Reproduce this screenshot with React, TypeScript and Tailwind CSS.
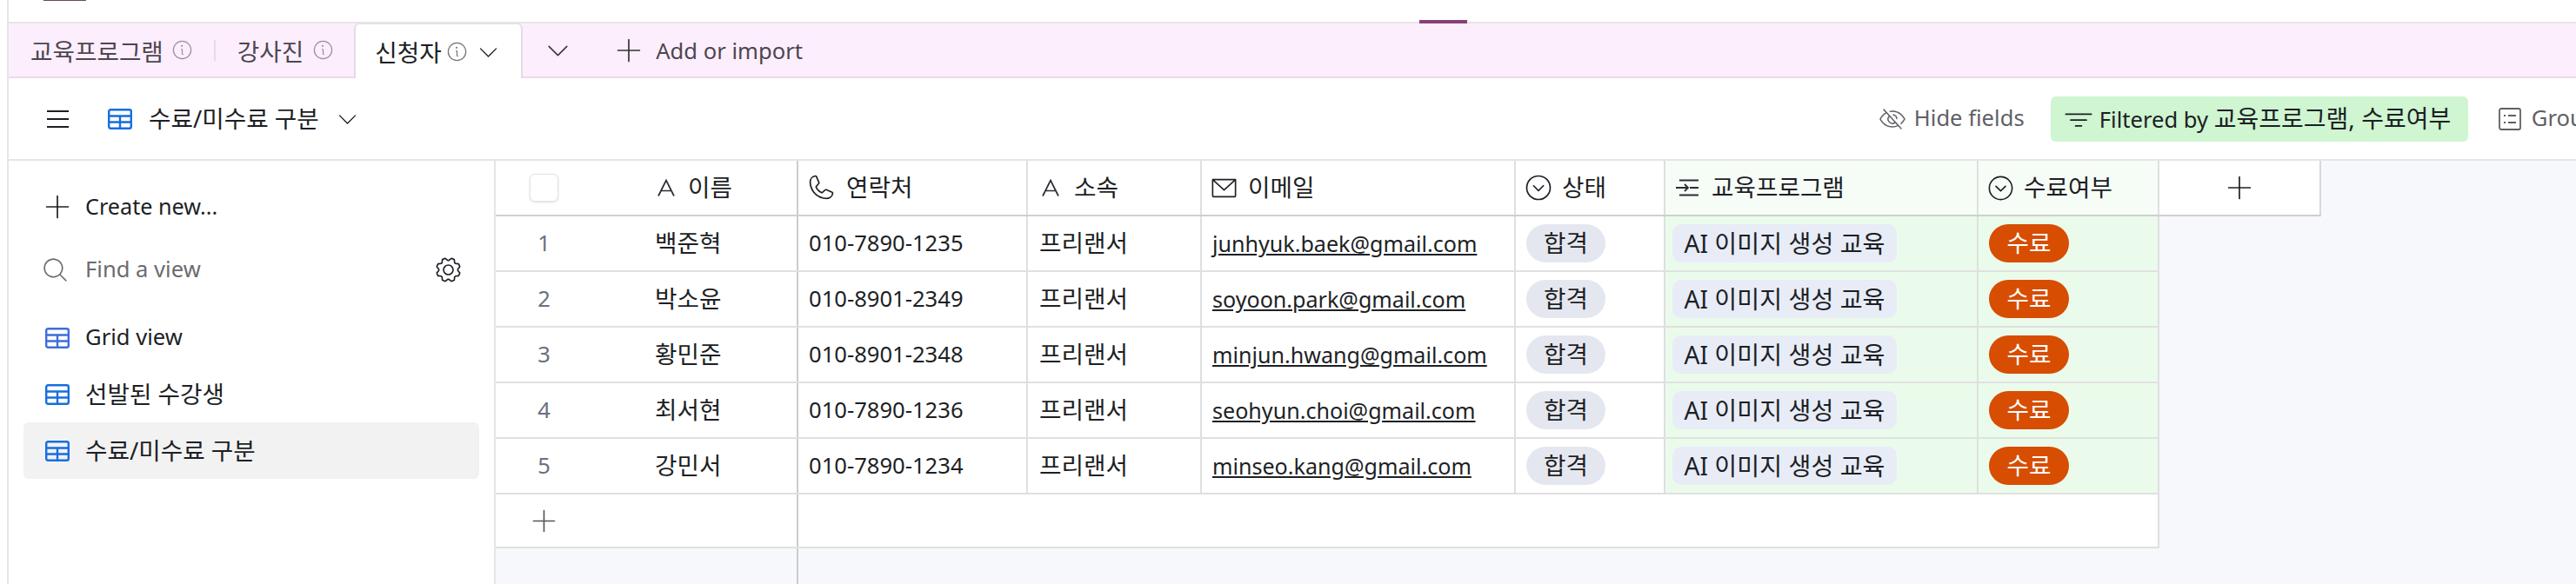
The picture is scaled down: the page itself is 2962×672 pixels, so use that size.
import React from 'react';
import {
  PiCaretCircleDownLight,
  PiCaretDownLight,
  PiEnvelopeSimpleLight,
  PiEyeSlashLight,
  PiFunnelSimpleLight,
  PiGearLight,
  PiInfoLight,
  PiMagnifyingGlassLight,
  PiPhoneLight,
  PiPlusLight,
} from 'react-icons/pi';

const rows = [
  { id: 1, name: '백준혁', phone: '010-7890-1235', email: 'junhyuk.baek@gmail.com' },
  { id: 2, name: '박소윤', phone: '010-8901-2349', email: 'soyoon.park@gmail.com' },
  { id: 3, name: '황민준', phone: '010-8901-2348', email: 'minjun.hwang@gmail.com' },
  { id: 4, name: '최서현', phone: '010-7890-1236', email: 'seohyun.choi@gmail.com' },
  { id: 5, name: '강민서', phone: '010-7890-1234', email: 'minseo.kang@gmail.com' },
];

// the grid icon used for every view
const GridIcon = ({ className }: { className?: string }) => (
  <svg className={className} viewBox="0 0 28 24" fill="none" stroke="currentColor" strokeWidth="2.4">
    <rect x="1.2" y="1.2" width="25.6" height="21.6" rx="2" />
    <path d="M1 8.5h26M1 15.5h26M14 8.5v14.5" />
  </svg>
);

const TextIcon = () => (
  <svg className="w-[20px] h-[20px] shrink-0" viewBox="0 0 20 20" fill="none" stroke="#2b2d33" strokeWidth="1.7">
    <path d="M1 19.5 10 1.5l9 18M4.5 13.5h11" />
  </svg>
);

const LinkedIcon = () => (
  <svg className="w-[26px] h-[20px] shrink-0" viewBox="0 0 26 20" fill="none" stroke="#2b2d33" strokeWidth="1.8">
    <path d="M4 1.5h22M16 10h10M4 18.5h22M0 10h14M10 6l4 4-4 4" />
  </svg>
);

const GroupIcon = () => (
  <svg className="w-[26px] h-[26px] shrink-0" viewBox="0 0 26 26" fill="none" stroke="#5f6066" strokeWidth="1.8">
    <rect x="1" y="1" width="24" height="24" rx="2" />
    <path d="M11 9h9M11 17h9M6 9h2M6 17h2" />
  </svg>
);

const HeaderCell = ({ icon, label, className }: { icon: React.ReactNode; label: string; className: string }) => (
  <div className={`flex items-center border-r-2 border-[#dedfe1] ${className}`}>
    {icon}
    <span className="text-[27.7px] text-[#1d1f25]">{label}</span>
  </div>
);

const App: React.FC = () => {
  return (
    <div className="flex w-[2962px] h-[672px] overflow-hidden bg-white font-['Noto_Sans','Noto_Sans_CJK_KR',sans-serif] text-[25.6px] text-[#1d1f25]">
      <div className="w-[8px] shrink-0" />
      <div className="flex flex-col w-[2954px] shrink-0 border-l-2 border-[#e5e5e5]">
        {/* top strip */}
        <div className="flex items-start h-[27px] shrink-0 border-b-2 border-[#e5e5e5]">
          <div className="ml-[40px] w-[49px] h-[1px] bg-[#6b4a5c]" />
          <div className="ml-[1533px] mt-[23px] w-[55px] h-[4px] bg-[#8a3f78]" />
        </div>

        {/* tab bar */}
        <div className="flex items-center h-[63px] shrink-0 bg-[#fceefd] border-b-2 border-[#e8dde8] text-[#4d4650]">
          <span className="ml-[25px] pt-[4px] text-[27.7px]">교육프로그램</span>
          <PiInfoLight className="ml-[8px] w-[27px] h-[27px] text-[#99939c]" />
          <div className="ml-[23px] w-[2px] h-[24px] bg-[#e6dbe6]" />
          <span className="ml-[25px] pt-[4px] text-[27.7px]">강사진</span>
          <PiInfoLight className="ml-[9px] w-[27px] h-[27px] text-[#99939c]" />
          <div className="flex items-center self-stretch ml-[22px] w-[194px] -mb-[2px] pl-[22px] bg-white rounded-t-[6px] border-x-2 border-t border-[#e2dde2] text-[#1d1f25]">
            <span className="pt-[4px] text-[27.7px]">신청자</span>
            <PiInfoLight className="ml-[4px] w-[27px] h-[27px] text-[#77737a]" />
            <PiCaretDownLight className="ml-[8px] w-[29px] h-[29px]" />
          </div>
          <PiCaretDownLight className="ml-[24px] w-[33px] h-[33px] text-[#333]" />
          <PiPlusLight className="ml-[47px] w-[36px] h-[36px] text-[#333]" />
          <span className="ml-[13px] pt-[4px] whitespace-nowrap">Add or import</span>
        </div>

        {/* view toolbar */}
        <div className="flex items-center h-[95px] shrink-0 border-b-2 border-[#e5e5e5]">
          <div className="ml-[44px] flex flex-col justify-between w-[25px] h-[20px] shrink-0">
            <div className="h-[2px] bg-[#1d1f25]" />
            <div className="h-[2px] bg-[#1d1f25]" />
            <div className="h-[2px] bg-[#1d1f25]" />
          </div>
          <GridIcon className="ml-[45px] w-[28px] h-[24px] shrink-0 text-[#166ee1]" />
          <span className="ml-[19px] text-[27.7px] shrink-0 whitespace-nowrap">수료/미수료 구분</span>
          <PiCaretDownLight className="ml-[18px] w-[29px] h-[29px] shrink-0" />
          <PiEyeSlashLight className="ml-[1746px] w-[32px] h-[32px] shrink-0 text-[#5f6066]" />
          <span className="ml-[9px] w-[157px] shrink-0 text-[#5f6066] whitespace-nowrap">Hide fields</span>
          <div className="flex items-center h-[52px] w-[480px] shrink-0 pl-[14px] rounded-[6px] bg-[#cff5d1] whitespace-nowrap">
            <PiFunnelSimpleLight className="w-[36px] h-[36px] shrink-0" />
            <span className="ml-[6px]">
              Filtered by <span className="text-[28px]">교육프로그램, 수료여부</span>
            </span>
          </div>
          <div className="ml-[35px] shrink-0">
            <GroupIcon />
          </div>
          <span className="ml-[12px] shrink-0 text-[#5f6066] whitespace-nowrap">Group</span>
        </div>

        <div className="flex flex-1 min-h-0">
          {/* sidebar */}
          <div className="w-[560px] shrink-0 border-r-2 border-[#e5e5e5] px-[17px] pt-[20px]">
            <div className="flex items-center h-[65px] pl-[21px]">
              <PiPlusLight className="w-[36px] h-[36px]" />
              <span className="ml-[14px] text-[25.2px]">Create new...</span>
            </div>
            <div className="flex items-center h-[64px] mt-[8px] pl-[20px] text-[#6b6b70]">
              <PiMagnifyingGlassLight className="w-[33px] h-[33px]" />
              <span className="ml-[18px] flex-1">Find a view</span>
              <PiGearLight className="mr-[18px] w-[35px] h-[35px] text-[#1d1f25]" />
            </div>
            <div className="mt-[14px]">
              <div className="flex items-center h-[65px] pl-[25px]">
                <GridIcon className="w-[28px] h-[24px] text-[#3f6ddb]" />
                <span className="ml-[18px]">Grid view</span>
              </div>
              <div className="flex items-center h-[65px] pl-[25px]">
                <GridIcon className="w-[28px] h-[24px] text-[#166ee1]" />
                <span className="ml-[18px] text-[27.7px]">선발된 수강생</span>
              </div>
              <div className="flex items-center h-[65px] pl-[25px] rounded-[6px] bg-[#f2f2f2]">
                <GridIcon className="w-[28px] h-[24px] text-[#166ee1]" />
                <span className="ml-[18px] text-[27.7px]">수료/미수료 구분</span>
              </div>
            </div>
          </div>

          {/* grid */}
          <div className="flex-1 min-w-0 flex flex-col bg-[#f7f8fb]">
            <div className="flex h-[64px] shrink-0 w-fit border-b-2 border-[#cfcfcf] bg-white">
              <div className="flex items-center w-[168px] pl-[39px]">
                <div className="w-[33px] h-[32px] rounded-[6px] bg-white border border-[#e3e3e3] shadow-sm" />
              </div>
              <div className="flex items-center gap-[15px] w-[180px] pl-[18px] border-r-2 border-[#cccccc]">
                <TextIcon />
                <span className="text-[27.7px]">이름</span>
              </div>
              <HeaderCell className="w-[264px] pl-[8px] gap-[11px]" icon={<PiPhoneLight className="w-[36px] h-[36px] shrink-0" />} label="연락처" />
              <HeaderCell className="w-[200px] pl-[16px] gap-[17px]" icon={<TextIcon />} label="소속" />
              <HeaderCell className="w-[361px] pl-[8px] gap-[10px]" icon={<PiEnvelopeSimpleLight className="w-[35px] h-[35px] shrink-0" />} label="이메일" />
              <HeaderCell className="w-[172px] pl-[8px] gap-[9px]" icon={<PiCaretCircleDownLight className="w-[36px] h-[36px] shrink-0" />} label="상태" />
              <HeaderCell className="w-[360px] pl-[12px] gap-[15px] bg-[#f6fcf6]" icon={<LinkedIcon />} label="교육프로그램" />
              <HeaderCell className="w-[208px] pl-[8px] gap-[9px] bg-[#f6fcf6]" icon={<PiCaretCircleDownLight className="w-[35px] h-[35px] shrink-0" />} label="수료여부" />
              <div className="flex items-center justify-center w-[186px] border-r-2 border-[#d9d9d9]">
                <PiPlusLight className="w-[36px] h-[36px]" />
              </div>
            </div>

            {rows.map(row => (
              <div key={row.id} className="flex h-[64px] shrink-0 w-fit border-b-2 border-[#e0e0e0] bg-white">
                <div className="flex items-center w-[168px]">
                  <span className="w-[111px] text-center text-[#6b6f80]">{row.id}</span>
                </div>
                <div className="flex items-center w-[180px] pl-[15px] border-r-2 border-[#cccccc]">
                  <span className="text-[27.7px]">{row.name}</span>
                </div>
                <div className="flex items-center w-[264px] pl-[12px] border-r-2 border-[#dedfe1]">{row.phone}</div>
                <div className="flex items-center w-[200px] pl-[13px] border-r-2 border-[#dedfe1] text-[27.7px]">프리랜서</div>
                <div className="flex items-center w-[361px] pl-[12px] border-r-2 border-[#dedfe1]">
                  <span className="underline pt-[2px] text-[25.1px]">{row.email}</span>
                </div>
                <div className="flex items-center w-[172px] pl-[12px] border-r-2 border-[#dedfe1]">
                  <span className="flex items-center justify-center w-[91px] h-[44px] rounded-[22px] bg-[#e5e7f0] text-[27.7px]">합격</span>
                </div>
                <div className="flex items-center w-[360px] pl-[8px] border-r-2 border-[#dedfe1] bg-[#ebfbeb]">
                  <span className="flex items-center justify-center w-[258px] h-[44px] rounded-[10px] bg-[#e8ecf7] whitespace-nowrap text-[28.2px]">AI 이미지 생성 교육</span>
                </div>
                <div className="flex items-center w-[208px] pl-[12px] border-r-2 border-[#dedfe1] bg-[#ebfbeb]">
                  <span className="flex items-center justify-center w-[92px] h-[44px] rounded-[22px] bg-[#d74d02] text-white text-[27.7px]">수료</span>
                </div>
              </div>
            ))}

            <div className="flex h-[62px] shrink-0 w-[1913px] border-b-2 border-[#e0e0e0] bg-white">
              <div className="flex items-center w-[348px] pl-[38px] border-r-2 border-[#cccccc]">
                <PiPlusLight className="w-[35px] h-[35px] text-[#555]" />
              </div>
              <div className="flex-1 border-r-2 border-[#dedfe1]" />
            </div>
            <div className="flex-1 w-[348px] border-r-2 border-[#cccccc]" />
          </div>
        </div>
      </div>
    </div>
  );
};

export default App;
